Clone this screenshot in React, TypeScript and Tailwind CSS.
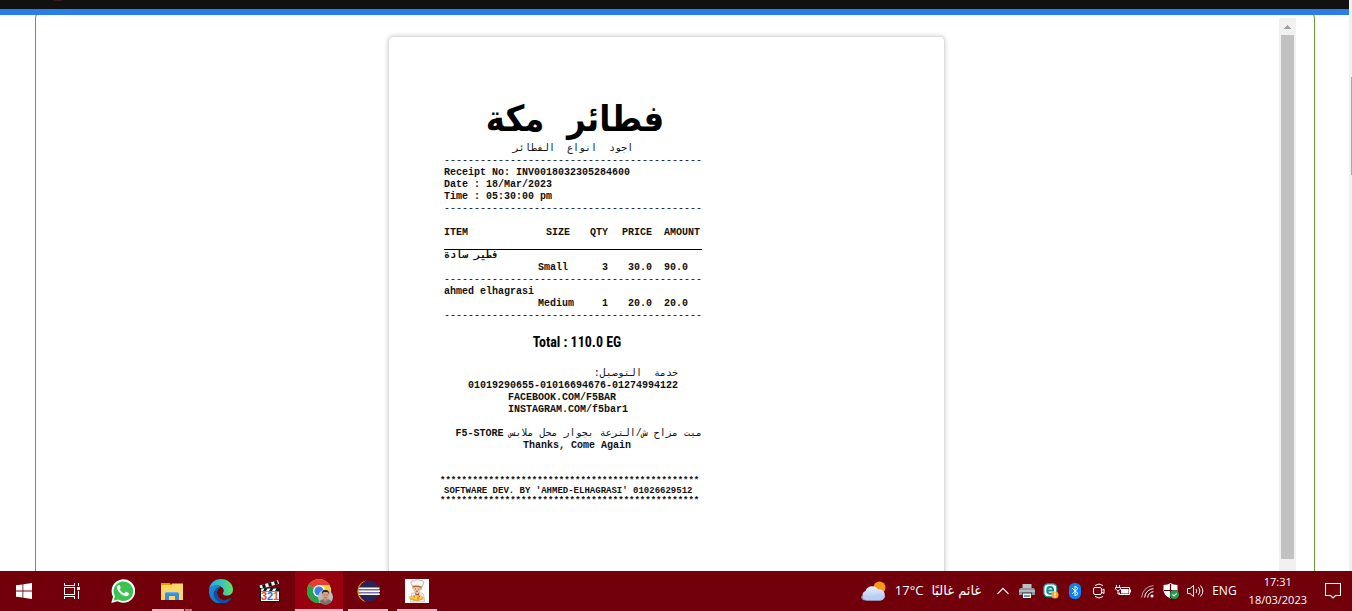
import type { ReactNode } from "react";

const DASHES = "-".repeat(43);
const STARS = "*".repeat(48);

const items = [
  { name: "فطير سادة", size: "Small", qty: "3", price: "30.0", amount: "90.0" },
  { name: "ahmed elhagrasi", size: "Medium", qty: "1", price: "20.0", amount: "20.0" },
];

function Receipt() {
  return (
    <article className="w-[258px] font-['Liberation_Mono','DejaVu_Sans_Mono',monospace] text-[10px] leading-[12px] font-bold whitespace-nowrap text-[#111]">
      <h1
        dir="rtl"
        className="pl-1 text-center font-['DejaVu_Sans_Condensed','DejaVu_Sans',sans-serif] text-[36px] leading-[48px] font-bold text-black"
      >
        فطائر&nbsp; مكة
      </h1>
      <p dir="rtl" className="text-center font-normal">
        اجود&nbsp; انواع&nbsp; الفطائر
      </p>
      <p className="font-normal">{DASHES}</p>
      <p>Receipt No: INV0018032305284600</p>
      <p>Date : 18/Mar/2023</p>
      <p>Time : 05:30:00 pm</p>
      <p className="font-normal">{DASHES}</p>
      <table className="mt-3 w-full table-fixed border-collapse">
        <colgroup>
          <col className="w-[94px]" />
          <col className="w-[40px]" />
          <col className="w-[30px]" />
          <col className="w-[44px]" />
          <col className="w-[50px]" />
        </colgroup>
        <thead>
          <tr className="border-b border-black text-left">
            <th className="p-0 pb-[10px]">ITEM</th>
            <th className="p-0 pb-[10px] pl-2">SIZE</th>
            <th className="p-0 pb-[10px] text-right">QTY</th>
            <th className="p-0 pb-[10px] text-right">PRICE</th>
            <th className="p-0 pb-[10px] pl-3">AMOUNT</th>
          </tr>
        </thead>
        {items.map((item) => (
          <tbody key={item.name}>
            <tr>
              <td colSpan={5} className="p-0">
                {item.name}
              </td>
            </tr>
            <tr>
              <td className="p-0" />
              <td className="p-0">{item.size}</td>
              <td className="p-0 text-right">{item.qty}</td>
              <td className="p-0 text-right">{item.price}</td>
              <td className="p-0 pl-3">{item.amount}</td>
            </tr>
            <tr>
              <td colSpan={5} className="p-0 font-normal">
                {DASHES}
              </td>
            </tr>
          </tbody>
        ))}
      </table>
      <p className="mt-[10px] pl-2 text-center font-['Liberation_Sans_Narrow','Roboto_Condensed','Liberation_Sans',sans-serif] text-[14px] leading-[20px] text-black">
        Total : 110.0 EG
      </p>
      <p dir="rtl" className="mt-4 pr-6 font-normal">
        خدمة&nbsp; التوصيل:
      </p>
      <p className="text-center">01019290655-01016694676-01274994122</p>
      <p className="pl-16">FACEBOOK.COM/F5BAR</p>
      <p className="pl-16">INSTAGRAM.COM/f5bar1</p>
      <p dir="rtl" className="mt-3">
        <span className="font-normal">ميت مزاح ش/الترعة بجوار محل ملابس</span> F5-STORE
      </p>
      <p className="pl-2 text-center">Thanks, Come Again</p>
      <div className="-ml-1 mt-6 text-[9px] leading-[10px]">
        <p>{STARS}</p>
        <p className="pl-1">SOFTWARE DEV. BY 'AHMED-ELHAGRASI' 01026629512</p>
        <p>{STARS}</p>
      </div>
    </article>
  );
}

function ScrollBar() {
  return (
    <div className="mt-[2px] mr-[18px] flex w-[17px] flex-col items-center bg-[#f1f1f1] pb-3">
      <svg viewBox="0 0 17 17" className="h-[17px] w-[17px] shrink-0" shapeRendering="crispEdges">
        <path d="M8 7h1v1h1v1h1v1h1v1H5v-1h1V9h1V8h1z" fill="#a3a3a3" />
      </svg>
      <div className="w-[13px] flex-1 bg-[#c1c1c1]" />
    </div>
  );
}

function AppButton({
  label,
  children,
  bar,
  active,
}: {
  label: string;
  children: ReactNode;
  bar?: ReactNode;
  active?: boolean;
}) {
  return (
    <button
      aria-label={label}
      className={
        active
          ? "relative flex h-10 w-12 items-center justify-center bg-[#98000f]"
          : "relative flex h-10 w-12 items-center justify-center"
      }
    >
      {children}
      {bar}
    </button>
  );
}

const shortBar = <span className="absolute inset-x-1 bottom-0 h-[2px] bg-[#ffb3bb]" />;

function StartIcon() {
  return (
    <svg viewBox="0 0 16 16" className="h-4 w-4" fill="#fff">
      <path d="M0 2.3 6.5 1.4V7.5H0zM7.3 1.3 16 0v7.5H7.3zM0 8.4h6.5v6.2L0 13.7zM7.3 8.4H16V16l-8.7-1.3z" />
    </svg>
  );
}

function TaskViewIcon() {
  return (
    <svg viewBox="0 0 16 16" className="h-4 w-4" fill="#fff" shapeRendering="crispEdges">
      <path d="M0 4h11v8H0zM1 5v6h9V5z" fillRule="evenodd" />
      <path d="M0 0h1v2h9V0h1v3H0zM0 13h11v3h-1v-2H1v2H0zM14 0h1v3h-1zM13 4h3v3h-3zM14 8h1v8h-1z" />
    </svg>
  );
}

function WhatsAppIcon() {
  return (
    <svg viewBox="0 0 24 24" className="h-6 w-6">
      <path d="M.3 24 2 17.700A11.800 11.800 0 1 1 6.500 22.300z" fill="#fff" />
      <path d="M2.600 21.700 3.900 17.200A9.800 9.800 0 1 1 7.100 20.500z" fill="#3cc251" />
      <path
        d="M8.900 6.500c-.3-.6-.6-.6-.9-.6-.8 0-2 .9-2 2.700 0 2 1.500 3.900 3 5.500 1.800 1.900 4.300 3.100 6.100 3.100 1.400 0 2.800-.9 2.900-2.200.1-.8 0-.9-.5-1.100l-2.200-1.100c-.4-.1-.6-.1-.8.2l-.9 1.100c-.2.3-.5.3-.8.1-1.300-.5-3.100-2-4-3.700-.2-.3 0-.5.200-.7.400-.5.800-.9.700-1.400z"
        fill="#fff"
      />
    </svg>
  );
}

function FolderIcon() {
  return (
    <svg viewBox="0 0 22 19" className="h-[19px] w-[22px]">
      <path d="M0 3h10l1-1.500h11V18H0z" fill="#ffd766" />
      <path d="M0 1h9l1 2H0z" fill="#e0a000" />
      <path d="M4 18v-6.500L5.500 10h11l1.500 1.500V18h-4v-4H8v4z" fill="#3490dd" />
      <path d="M5.500 10h11l1 1.200h-13.500z" fill="#63b2ee" />
    </svg>
  );
}

function EdgeIcon() {
  return (
    <svg viewBox="0 0 24 24" className="h-6 w-6">
      <defs>
        <linearGradient id="edgeTop" x1="0" y1="0.500" x2="1" y2="0.500">
          <stop offset="0" stopColor="#2aa8e6" />
          <stop offset="0.550" stopColor="#37c6b5" />
          <stop offset="1" stopColor="#6adf58" />
        </linearGradient>
        <linearGradient id="edgeSide" x1="0" y1="0" x2="0.500" y2="1">
          <stop offset="0" stopColor="#1a93d8" />
          <stop offset="1" stopColor="#0f6fc9" />
        </linearGradient>
      </defs>
      <path d="M0 11C.5 4.500 5.500 0 12 0c7 0 12 5 12 10.500 0 4-3 6-6 6-2.500 0-4.200-1-4.200-1.800 0-.6 1-1.200 1-2.900C14.800 8.500 11 6.500 7.500 6.500 3 6.500.5 9 0 11z" fill="url(#edgeTop)" />
      <path d="M0 11c.8-3 4-4.800 7.500-4.600 1.500.1 3 .5 4.200 1.300C9 9 8 11.500 8 13.500c0 5 4 8.300 9 7.500 1.500-.2 3-.8 4.500-1.800.5-.3.8 0 .4.500A12 12 0 0 1 0 12z" fill="url(#edgeSide)" />
      <path d="M11.700 7.700C9.500 8.500 8 10.800 8 13.500c0 5 4 8.300 9 7.500 1.500-.2 3-.8 4.500-1.800.5-.3.8 0 .4.500a11 11 0 0 1-8.500 4.200C7 23 4.500 18.500 4.800 14.500 5 11 8 8 11.700 7.700z" fill="#0c4f9e" />
    </svg>
  );
}

function ClapperIcon() {
  return (
    <svg viewBox="0 0 24 24" className="h-6 w-6">
      <path d="M1.500 6.500 20 1.200l1 3.600L2.500 10z" fill="#f5f5f5" />
      <path d="m4 5.800 3-.9 1 3.600-3 .8zM10 4.100l3-.9 1 3.500-3 .9zM16 2.400l3-.9 1 3.500-3 .9z" fill="#111" />
      <path d="M2 9h20v14H2z" fill="#151515" />
      <path d="M3.500 9.500h3L5 12H3zM9.500 9.500h3L11 12H8zM15.500 9.500h3L17 12h-3z" fill="#fff" />
      <path d="M3 12.500h18v9.500H3z" fill="#fff" />
      <g fontFamily="Liberation Sans" fontSize="11" fontWeight="700">
        <text x="3" y="21" fill="#e04b2f">3</text>
        <text x="9" y="21" fill="#2b70c9">2</text>
        <text x="15" y="21" fill="#d9642a">1</text>
      </g>
    </svg>
  );
}

function ChromeIcon() {
  return (
    <svg viewBox="0 0 26 26" className="mt-[2px] ml-[2px] h-[26px] w-[26px]">
      <circle cx="12" cy="12" r="12" fill="#fdd03b" />
      <path d="M12 12 1.600 6a12 12 0 0 1 20.800 0z" fill="#e5402f" />
      <path d="M12 12 1.600 6A12 12 0 0 0 12 24l5-9z" fill="#25a24a" />
      <path d="M12 6h10.400A12 12 0 0 1 12 24l5.200-9z" fill="#fdd03b" />
      <circle cx="12" cy="12" r="6" fill="#fff" />
      <circle cx="12" cy="12" r="4.600" fill="#3c7de6" />
      <circle cx="18.500" cy="18" r="7.500" fill="#b8bcc0" />
      <path d="M12.500 22.500c1.500-2 3-2.500 6-2.500s4.800.8 6 2.500a7.500 7.500 0 0 1-12 0z" fill="#77706f" />
      <path d="M16.500 19h4v2.500l-2 1.500-2-1.500z" fill="#b98468" />
      <ellipse cx="18.500" cy="16.300" rx="3.300" ry="4.300" fill="#d9a483" />
      <path d="M15 15.500c-.3-4 1.500-4.500 3.500-4.500s3.800.8 3.500 4.500c-.7-2-1-2.500-3.500-2.500s-2.800.500-3.500 2.500z" fill="#292522" />
      <path d="M16.700 16h1.200M19.300 16h1.200M17.300 18.700h2.500" stroke="#5d3428" strokeWidth=".6" />
    </svg>
  );
}

function EclipseIcon() {
  return (
    <svg viewBox="0 0 24 24" className="h-6 w-6">
      <path d="M10 1.500A11 11 0 0 0 10 23 12.500 12.500 0 0 1 10 1.500z" fill="#f7941e" />
      <circle cx="13" cy="12" r="10.500" fill="#2c2255" />
      <path d="M3 8.500h20.500v1.800H2.700zM2.500 11.300H24v1.800H2.500zM2.700 14.200h21V16H3z" fill="#fff" />
      <path d="M3 10.300h20v1H3zM3 13.100h20v1.100H3z" fill="#7d74a8" />
    </svg>
  );
}

function ChefIcon() {
  return (
    <svg viewBox="0 0 24 24" className="h-6 w-6">
      <path d="M0 0h24v24H0z" fill="#fff" />
      <path d="M7.500 7 6 4.500C5.500 2 8 1 9.500 2c1-1.800 4.500-1.800 5.500-.3 2-.9 4.200.8 3.500 2.800L17 8z" fill="#f6f6f6" stroke="#888" strokeWidth=".6" />
      <path d="M7.500 7c2.500-1 6.500-.7 9.300.8l-.5 3-8.800-1z" fill="#b66a3b" />
      <path d="M8 8.500c2-1 6-.8 8 .6.300 3-1.500 4.700-4 4.700s-4.200-1.800-4-5.300z" fill="#f7c39c" />
      <path d="M10 10h1M13.300 10.300h1M11 12.200h2" stroke="#6b3024" strokeWidth=".7" />
      <path d="M6.500 14.500 10 13.500h4.500l4 1.500 1 8h-14z" fill="#eee" stroke="#aaa" strokeWidth=".6" />
      <path d="m10 13.500 2 1.500 2.500-1.300-.7 3h-3z" fill="#d33b32" />
      <ellipse cx="11.500" cy="19" rx="7" ry="3" fill="#e4a52c" />
      <ellipse cx="11.500" cy="18.400" rx="5.500" ry="2" fill="#f7d652" />
      <path d="M8.500 18h1.500M12 19h2M13.500 17.500h1.500" stroke="#c94b27" />
      <path d="M4 17c-1 1-.5 3 1 3l1-2zM18 18l2 .5-.5 2-2 .3z" fill="#f7c39c" />
    </svg>
  );
}

function WeatherIcon() {
  return (
    <svg viewBox="0 0 26 20" className="h-5 w-[26px]">
      <defs>
        <linearGradient id="cloud" x1="0" y1="0" x2="0" y2="1">
          <stop offset="0" stopColor="#e8f0fc" />
          <stop offset="1" stopColor="#a9c4f0" />
        </linearGradient>
      </defs>
      <circle cx="18.500" cy="6.500" r="6" fill="#f79a1b" />
      <path d="M5.500 19.500A5 5 0 0 1 4.500 10 7 7 0 0 1 17 8.500a5.500 5.500 0 0 1 2.500 11z" fill="url(#cloud)" />
      <path d="M4.500 19.500c-3 0-4.500-2-4.500-4 4-2 8 1 12-1 4-2 8-2 12 .5 0 2.500-2 4.500-5 4.500z" fill="#b7cdf4" opacity=".7" />
    </svg>
  );
}

function PrinterIcon() {
  return (
    <svg viewBox="0 0 16 16" className="h-4 w-4">
      <path d="M3.500 1h9v5h-9z" fill="#b9bfc2" />
      <path d="M1 5h14l1 2v5H0V7z" fill="#8f989d" />
      <path d="M0 7h16v2H0z" fill="#b3babd" />
      <path d="M3 9.500h10v2H3z" fill="#343a3d" />
      <path d="M4 10.500h8V15H4z" fill="#f7f7f7" />
      <path d="M5 12h3v2H5z" fill="#4c9ed9" />
      <path d="M8 12h3v2H8z" fill="#6ab34e" />
    </svg>
  );
}

function AntivirusIcon() {
  return (
    <svg viewBox="0 0 16 16" className="h-4 w-4">
      <rect x=".8" y=".8" width="13" height="13" rx="4" fill="#fff" stroke="#0b8f93" strokeWidth="1.200" />
      <path d="M4.200 7.500h6c0-2.200-1-3.500-3-3.500S4.200 5.500 4.200 7.500s1 3.400 3.200 3.400c1 0 2-.3 2.600-.9" fill="none" stroke="#0b8f93" strokeWidth="1.800" />
      <circle cx="12" cy="12" r="3.500" fill="#f5a623" />
      <path d="M12 9.500v3M12 13.300v1.200" stroke="#fff" strokeWidth="1.200" />
    </svg>
  );
}

function BluetoothIcon() {
  return (
    <svg viewBox="0 0 12 16" className="h-4 w-3">
      <rect width="12" height="16" rx="5.500" fill="#0a84f5" />
      <path d="m3 5 6 5.500L6 13V3l3 2.500L3 11" fill="none" stroke="#fff" />
    </svg>
  );
}

function CameraIcon() {
  return (
    <svg viewBox="0 0 12 16" className="h-4 w-3" fill="none" stroke="#fff">
      <rect x=".5" y="4.500" width="8" height="7" rx="1.500" />
      <path d="m8.500 7.500 2.500-1.500v4.500l-2.500-1.500M2 2.500Q6-.5 10 2.500M2 13.500q4 3 8 0" />
    </svg>
  );
}

function BatteryIcon() {
  return (
    <svg viewBox="0 0 16 12" className="h-3 w-4" fill="none" stroke="#fff">
      <path d="M6.500 2.500h8v7h-10V7.500M15.500 4.500v3" />
      <path d="M6 4h7.500v4.500H6z" fill="#fff" stroke="none" />
      <path d="M1.500 0v2M4.500 0v2M.5 2.500h5V4L4 5.500H2L.5 4zM3 5.500v3.500h2" />
    </svg>
  );
}

function WifiIcon() {
  return (
    <svg viewBox="0 0 13 13" className="h-[13px] w-[13px]" fill="none" stroke="#fff">
      <path d="M.7 12.500A12 12 0 0 1 12.500.7" opacity=".6" />
      <path d="M3.700 12.500a9 9 0 0 1 8.800-8.800M6.700 12.500a6 6 0 0 1 5.800-5.800" />
      <circle cx="11" cy="11" r="1.500" fill="#fff" stroke="none" />
    </svg>
  );
}

function ShieldIcon() {
  return (
    <svg viewBox="0 0 16 16" className="h-4 w-4">
      <path d="M7.500 0C9 1.300 12 2 14.500 2v5c0 4-3.500 7-7 8.500C4 14 .5 11 .5 7V2c2.500 0 5.500-.7 7-2z" fill="#fff" />
      <path d="M7.500 1v14M1 7.500h13" stroke="#58000a" strokeWidth="1.200" />
      <circle cx="11.500" cy="11.500" r="4.500" fill="#1f9d4d" />
      <path d="m9.500 11.500 1.500 1.500 2.700-2.700" fill="none" stroke="#fff" strokeWidth="1.100" />
    </svg>
  );
}

function SpeakerIcon() {
  return (
    <svg viewBox="0 0 17 14" className="h-[14px] w-[17px]" fill="none" stroke="#fff">
      <path d="M.5 4.500H3L6.500 1.500v11L3 9.500H.5zM9 5q1.500 2 0 4M11.200 3.200q3.300 3.800 0 7.600M13.400 1.500q5 5.500 0 11" />
    </svg>
  );
}

function Taskbar() {
  return (
    <footer className="flex h-10 shrink-0 items-center justify-between bg-[#72000b] font-['Open_Sans','Noto_Sans',sans-serif] text-[11px] text-white">
      <nav aria-label="Taskbar" className="flex items-center">
        <AppButton label="Start">
          <StartIcon />
        </AppButton>
        <AppButton label="Task view">
          <TaskViewIcon />
        </AppButton>
        <div className="ml-[3px] flex gap-px">
          <AppButton label="WhatsApp">
            <WhatsAppIcon />
          </AppButton>
          <AppButton
            label="File Explorer"
            bar={
              <span className="absolute inset-x-1 bottom-0 flex h-[2px]">
                <span className="flex-1 bg-[#ffb3bb]" />
                <span className="w-2 border-l border-[#72000b] bg-[#b8747b]" />
              </span>
            }
          >
            <FolderIcon />
          </AppButton>
          <AppButton label="Edge">
            <EdgeIcon />
          </AppButton>
          <AppButton label="Media Player">
            <ClapperIcon />
          </AppButton>
          <AppButton
            label="Chrome"
            active
            bar={<span className="absolute inset-x-0 bottom-0 h-[2px] bg-[#ffb3bb]" />}
          >
            <ChromeIcon />
          </AppButton>
          <AppButton label="Eclipse" bar={shortBar}>
            <EclipseIcon />
          </AppButton>
          <AppButton label="Restaurant" bar={shortBar}>
            <ChefIcon />
          </AppButton>
        </div>
      </nav>
      <div className="flex items-center pr-[11px]">
        <button className="flex items-center gap-2 text-[13px]">
          <WeatherIcon />
          <span>17°C</span>
          <span dir="rtl" className="font-['DejaVu_Sans',sans-serif]">
            غائم غالبًا
          </span>
        </button>
        <div className="ml-4 flex items-center gap-2">
          <button aria-label="Show hidden icons" className="mr-[2px]">
            <svg viewBox="0 0 12 8" className="h-2 w-3" fill="none" stroke="#fff" strokeWidth="1.200">
              <path d="m.5 6.800 5.500-5.500 5.500 5.500" />
            </svg>
          </button>
          <PrinterIcon />
          <AntivirusIcon />
          <span className="flex w-4 justify-center">
            <BluetoothIcon />
          </span>
          <span className="flex w-4 justify-center">
            <CameraIcon />
          </span>
          <BatteryIcon />
          <span className="flex w-4 justify-center">
            <WifiIcon />
          </span>
          <ShieldIcon />
          <SpeakerIcon />
          <button className="text-[12px]">ENG</button>
        </div>
        <button className="ml-3 text-center leading-[18px]">
          <time className="block">17:31</time>
          <time className="block">18/03/2023</time>
        </button>
        <button aria-label="Notifications" className="ml-[18px]">
          <svg viewBox="0 0 16 16" className="h-4 w-4" fill="none" stroke="#fff" strokeWidth="1.100">
            <path d="M.5.500h15v12h-5L8 15l-2.500-2.500h-5z" />
          </svg>
        </button>
      </div>
    </footer>
  );
}

export default function App() {
  return (
    <div className="flex h-screen flex-col overflow-hidden bg-white">
      <div className="flex min-h-0 flex-1">
        <div className="flex min-w-0 flex-1 flex-col">
          <header className="h-[15px] shrink-0 border-b-[6px] border-[#277ee8] bg-[#111] pl-[54px]">
            <div className="h-px w-2 bg-[#3a1f12]" />
          </header>
          <main className="flex min-h-0 flex-1 overflow-hidden pr-[34px] pl-[35px]">
            <section className="-mt-[3px] flex min-w-0 flex-1 rounded-t-[6px] border border-b-0 border-[#689f38] pt-[3px]">
              <div className="flex min-w-0 flex-1 justify-center overflow-hidden pt-5 pl-[18px]">
                <div className="h-[600px] w-[557px] rounded-[5px] border border-[#dcdcdf] bg-white pt-[58px] pl-[55px] shadow-[0_0_5px_rgba(0,0,0,0.2)]">
                  <Receipt />
                </div>
              </div>
              <ScrollBar />
            </section>
          </main>
        </div>
        <div className="flex w-[3px] justify-end bg-[#f1f1f1] pt-[77px]">
          <div className="h-[98px] w-px bg-[#a8a8a8]" />
        </div>
      </div>
      <Taskbar />
    </div>
  );
}
